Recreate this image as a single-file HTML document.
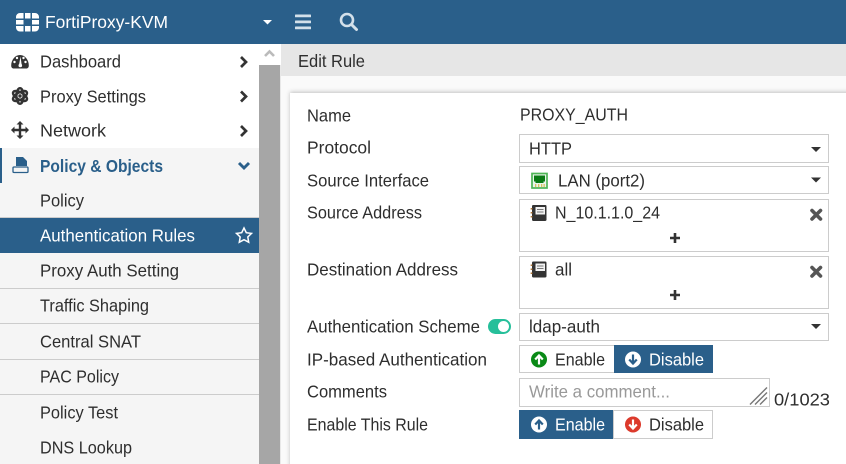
<!DOCTYPE html>
<html><head><meta charset="utf-8"><title>Edit Rule</title>
<style>
html,body{margin:0;padding:0;background:#fff;overflow:hidden}
svg{display:block}
text{font-family:"Liberation Sans",sans-serif;font-size:17.5px;fill:#2e2e2e}
.w{fill:#fff}
.bl{fill:#2a5f8a;font-weight:bold}
</style></head><body>
<svg width="846" height="464" viewBox="0 0 846 464" xmlns="http://www.w3.org/2000/svg">
<defs>
<filter id="sh" x="-5%" y="-5%" width="110%" height="110%"><feGaussianBlur stdDeviation="2"/></filter>
</defs>
<rect width="846" height="464" fill="#fafafa"/>
<!-- header -->
<rect width="846" height="44" fill="#2a5f8a"/>
<g fill="#fff">
<path d="M20 13h3.500v5.500h-7.500v-1.500a4 4 0 0 1 4-4zM25 13h5.500v5.500h-5.500zM32 13h3a4 4 0 0 1 4 4v1.500h-7zM16 20h7.500v4.500h-7.500zM32 20h7v4.500h-7zM16 26h7.500v5.500h-3.500a4 4 0 0 1-4-4zM25 26h5.500v5.500h-5.500zM32 26h7v1.500a4 4 0 0 1-4 4h-3z"/>
</g>
<text class="w" x="45" y="28" textLength="123" lengthAdjust="spacingAndGlyphs">FortiProxy-KVM</text>
<path d="M263 20h9l-4.500 4.500z" fill="#fff"/>
<g fill="#d3e0ea"><rect x="295" y="14.500" width="16" height="2.800" rx=".6"/><rect x="295" y="20.500" width="16" height="2.800" rx=".6"/><rect x="295" y="26.500" width="16" height="2.800" rx=".6"/></g>
<circle cx="347" cy="20" r="6" fill="none" stroke="#d3e0ea" stroke-width="2.600"/>
<path d="M351.500 24.500l5 5" stroke="#d3e0ea" stroke-width="3" stroke-linecap="round"/>

<!-- sidebar -->
<rect x="0" y="44" width="259" height="104" fill="#fff"/>
<rect x="0" y="148" width="259" height="316" fill="#f5f5f5"/>
<rect x="0" y="148" width="2" height="35" fill="#2a5f8a"/>
<rect x="259" y="44" width="22" height="21" fill="#fff"/>
<rect x="259" y="65" width="21" height="399" fill="#a6a6a6"/>
<rect x="280" y="65" width="1" height="399" fill="#e8e8e8"/>
<path d="M265 56l4.500-4.500 4.500 4.500" fill="none" stroke="#bbb" stroke-width="2.600"/>
<g fill="#ccc">
<rect x="0" y="217" width="259" height="1"/>
<rect x="0" y="288" width="259" height="1"/>
<rect x="0" y="323" width="259" height="1"/>
<rect x="0" y="359" width="259" height="1"/>
<rect x="0" y="394" width="259" height="1"/>
</g>
<rect x="0" y="218" width="259" height="35" fill="#2a5f8a"/>

<!-- sidebar icons -->
<path d="M11.200 65.500a8.800 10.500 0 1 1 17.600 0c0 1.800-.8 3-2.500 3h-12.600c-1.700 0-2.500-1.200-2.500-3z" fill="#333"/>
<g fill="#fff"><circle cx="14.500" cy="62" r="1.200"/><circle cx="17" cy="58" r="1.200"/><circle cx="25.500" cy="62" r="1.200"/><circle cx="23.500" cy="58" r="1.200"/><path d="M19 65l1.500-8.500 1.200 8.500z"/><circle cx="20.300" cy="65.500" r="1.800"/></g>
<g fill="none" stroke="#333" stroke-width="2.400">
<ellipse cx="20" cy="96" rx="3.600" ry="7.800"/>
<ellipse cx="20" cy="96" rx="3.600" ry="7.800" transform="rotate(60 20 96)"/>
<ellipse cx="20" cy="96" rx="3.600" ry="7.800" transform="rotate(-60 20 96)"/>
</g>
<circle cx="20" cy="96" r="1.700" fill="#333"/>
<path d="M20 121l3.500 3.500h-2.300v4.300h4.300v-2.300l3.500 3.500-3.500 3.500v-2.300h-4.300v4.300h2.300l-3.500 3.500-3.500-3.500h2.300v-4.300h-4.300v2.300l-3.500-3.500 3.500-3.500v2.300h4.300v-4.300h-2.300z" fill="#333"/>
<path d="M16 157h7l4 4v5h-11z" fill="#2a5f8a"/>
<path d="M14 167h13a1 1 0 0 1 1 1v3.500a1 1 0 0 1-1 1h-13a1 1 0 0 1-1-1v-3.500a1 1 0 0 1 1-1z" fill="none" stroke="#2a5f8a" stroke-width="1.300"/>
<g fill="none" stroke="#333" stroke-width="2.700"><path d="M241 57l5 5-5 5"/><path d="M241 91.500l5 5-5 5"/><path d="M241 126l5 5-5 5"/></g>
<path d="M239 163l5 5 5-5" fill="none" stroke="#2a5f8a" stroke-width="2.900"/>
<polygon points="244,228 246.300,232.700 251.500,233.400 247.800,237 248.700,242.200 244,239.700 239.300,242.200 240.200,237 236.500,233.400 241.700,232.700" fill="none" stroke="#fff" stroke-width="1.500"/>

<!-- sidebar text -->
<text x="40" y="67.500" textLength="81" lengthAdjust="spacingAndGlyphs">Dashboard</text>
<text x="40" y="102.500" textLength="106" lengthAdjust="spacingAndGlyphs">Proxy Settings</text>
<text x="40" y="136.500" textLength="66" lengthAdjust="spacingAndGlyphs">Network</text>
<text class="bl" x="40" y="172" textLength="123" lengthAdjust="spacingAndGlyphs">Policy &amp; Objects</text>
<text x="40" y="206.500" textLength="44" lengthAdjust="spacingAndGlyphs">Policy</text>
<text class="w" x="40" y="241.500" textLength="155" lengthAdjust="spacingAndGlyphs">Authentication Rules</text>
<text x="40" y="276.500" textLength="139" lengthAdjust="spacingAndGlyphs">Proxy Auth Setting</text>
<text x="40" y="311.500" textLength="109" lengthAdjust="spacingAndGlyphs">Traffic Shaping</text>
<text x="40" y="347.500" textLength="101" lengthAdjust="spacingAndGlyphs">Central SNAT</text>
<text x="40" y="382.500" textLength="79" lengthAdjust="spacingAndGlyphs">PAC Policy</text>
<text x="40" y="418.500" textLength="78" lengthAdjust="spacingAndGlyphs">Policy Test</text>
<text x="40" y="453.500" textLength="92" lengthAdjust="spacingAndGlyphs">DNS Lookup</text>

<!-- content -->
<rect x="281" y="44" width="565" height="32" fill="#e6e6e6"/>
<text x="298" y="67" textLength="67" lengthAdjust="spacingAndGlyphs">Edit Rule</text>
<rect x="290" y="92" width="570" height="390" fill="#999" filter="url(#sh)" opacity=".6"/>
<rect x="290" y="93" width="556" height="371" fill="#fff"/>

<!-- labels -->
<text x="307" y="121.500" textLength="44" lengthAdjust="spacingAndGlyphs">Name</text>
<text x="307" y="153.500" textLength="64" lengthAdjust="spacingAndGlyphs">Protocol</text>
<text x="307" y="186.500" textLength="122" lengthAdjust="spacingAndGlyphs">Source Interface</text>
<text x="307" y="218.500" textLength="115" lengthAdjust="spacingAndGlyphs">Source Address</text>
<text x="307" y="275.500" textLength="151" lengthAdjust="spacingAndGlyphs">Destination Address</text>
<text x="307" y="332.500" textLength="173" lengthAdjust="spacingAndGlyphs">Authentication Scheme</text>
<text x="307" y="365.500" textLength="180" lengthAdjust="spacingAndGlyphs">IP-based Authentication</text>
<text x="307" y="397.500" textLength="80" lengthAdjust="spacingAndGlyphs">Comments</text>
<text x="307" y="430.500" textLength="121" lengthAdjust="spacingAndGlyphs">Enable This Rule</text>

<!-- toggle -->
<rect x="488" y="319" width="23" height="15" rx="7.500" fill="#26bf9a"/>
<circle cx="503.500" cy="326.500" r="5.500" fill="#fff"/>

<!-- fields -->
<text x="520" y="120.500" textLength="108" lengthAdjust="spacingAndGlyphs">PROXY_AUTH</text>
<g fill="#fff" stroke="#ccc" stroke-width="1">
<rect x="519.500" y="134.500" width="309" height="28"/>
<rect x="519.500" y="166.500" width="309" height="27"/>
<rect x="519.500" y="199.500" width="309" height="52"/>
<rect x="519.500" y="256.500" width="309" height="52"/>
<rect x="519.500" y="313.500" width="309" height="27"/>
<rect x="519.500" y="345.500" width="95" height="27"/>
<rect x="519.500" y="378.500" width="250" height="28"/>
<rect x="613.500" y="410.500" width="99" height="28"/>
</g>
<text x="529" y="154.500" textLength="43" lengthAdjust="spacingAndGlyphs">HTTP</text>
<text x="558" y="186.500" textLength="87" lengthAdjust="spacingAndGlyphs">LAN (port2)</text>
<text x="555" y="218.500" textLength="105" lengthAdjust="spacingAndGlyphs">N_10.1.1.0_24</text>
<text x="555" y="275.500" textLength="17" lengthAdjust="spacingAndGlyphs">all</text>
<text x="529" y="332.500" textLength="71" lengthAdjust="spacingAndGlyphs">ldap-auth</text>
<g fill="#333">
<path d="M811 147h10l-5 5z"/><path d="M811 177.500h10l-5 5z"/><path d="M811 324h10l-5 5z"/>
</g>
<!-- LAN icon -->
<rect x="532" y="173.500" width="15" height="14.500" fill="#eaf5ea" stroke="#4fb556" stroke-width="1.700"/>
<path d="M534 175.500h11v6h-1.500v1.500h-8v-1.500h-1.500z" fill="#0a7a14"/>
<g fill="#d8c060"><rect x="535" y="184" width="1.300" height="3"/><rect x="538" y="184" width="1.300" height="3"/><rect x="541" y="184" width="1.300" height="3"/><rect x="543.500" y="184" width="1.300" height="3"/></g>
<!-- address icons -->
<g>
<rect x="532" y="205" width="14.500" height="16" rx="1.200" fill="#333"/>
<rect x="535.500" y="207" width="9.500" height="7.500" fill="#f2f2f2"/>
<path d="M537 209.500h6.500M537 212h6.500" stroke="#777" stroke-width=".9"/>
<path d="M531.500 208v1.500M531.500 212v1.500M531.500 216v1.500" stroke="#b57a3a" stroke-width="1.700"/>
</g>
<g transform="translate(0,56.500)">
<rect x="532" y="205" width="14.500" height="16" rx="1.200" fill="#333"/>
<rect x="535.500" y="207" width="9.500" height="7.500" fill="#f2f2f2"/>
<path d="M537 209.500h6.500M537 212h6.500" stroke="#777" stroke-width=".9"/>
<path d="M531.500 208v1.500M531.500 212v1.500M531.500 216v1.500" stroke="#b57a3a" stroke-width="1.700"/>
</g>
<!-- x and plus -->
<g stroke="#555" stroke-width="3.600" stroke-linecap="round"><path d="M812 210.500l8.500 8.500M820.500 210.500l-8.500 8.500"/><path d="M812 267.500l8.500 8.500M820.500 267.500l-8.500 8.500"/></g>
<g stroke="#333" stroke-width="2.600"><path d="M670 238h10M675 233v10"/><path d="M670 295h10M675 290v10"/></g>

<!-- IP-based buttons -->
<rect x="614" y="345" width="99" height="28" fill="#2a5f8a"/>
<circle cx="539" cy="359.500" r="8" fill="#0a8a16"/>
<path d="M539 364.500v-8M535.200 359.500l3.800-4 3.800 4" fill="none" stroke="#fff" stroke-width="2.200"/>
<text x="555" y="365.500" textLength="50" lengthAdjust="spacingAndGlyphs">Enable</text>
<circle cx="633" cy="359.500" r="8" fill="#fff"/>
<path d="M633 354.500v8M629.200 359.500l3.800 4 3.800-4" fill="none" stroke="#2a5f8a" stroke-width="2.200"/>
<text class="w" x="649" y="365.500" textLength="55" lengthAdjust="spacingAndGlyphs">Disable</text>

<!-- comments -->
<text x="529" y="397.500" textLength="141" lengthAdjust="spacingAndGlyphs" style="fill:#999">Write a comment...</text>
<g stroke="#777" stroke-width="1.400"><path d="M750 404.500l17-17"/><path d="M755 404.500l12-12"/><path d="M760 404.500l7-7"/></g>
<text x="774" y="405.500" textLength="56" lengthAdjust="spacingAndGlyphs">0/1023</text>

<!-- enable rule buttons -->
<rect x="519" y="410" width="94" height="29" fill="#2a5f8a"/>
<circle cx="539" cy="424.500" r="8" fill="#fff"/>
<path d="M539 429.500v-8M535.200 424.500l3.800-4 3.800 4" fill="none" stroke="#2a5f8a" stroke-width="2.200"/>
<text class="w" x="555" y="430.500" textLength="50" lengthAdjust="spacingAndGlyphs">Enable</text>
<circle cx="633" cy="424.500" r="8" fill="#dc3a2c"/>
<path d="M633 419.500v8M629.200 424.500l3.800 4 3.800-4" fill="none" stroke="#fff" stroke-width="2.200"/>
<text x="649" y="430.500" textLength="55" lengthAdjust="spacingAndGlyphs">Disable</text>
</svg>
</body></html>
